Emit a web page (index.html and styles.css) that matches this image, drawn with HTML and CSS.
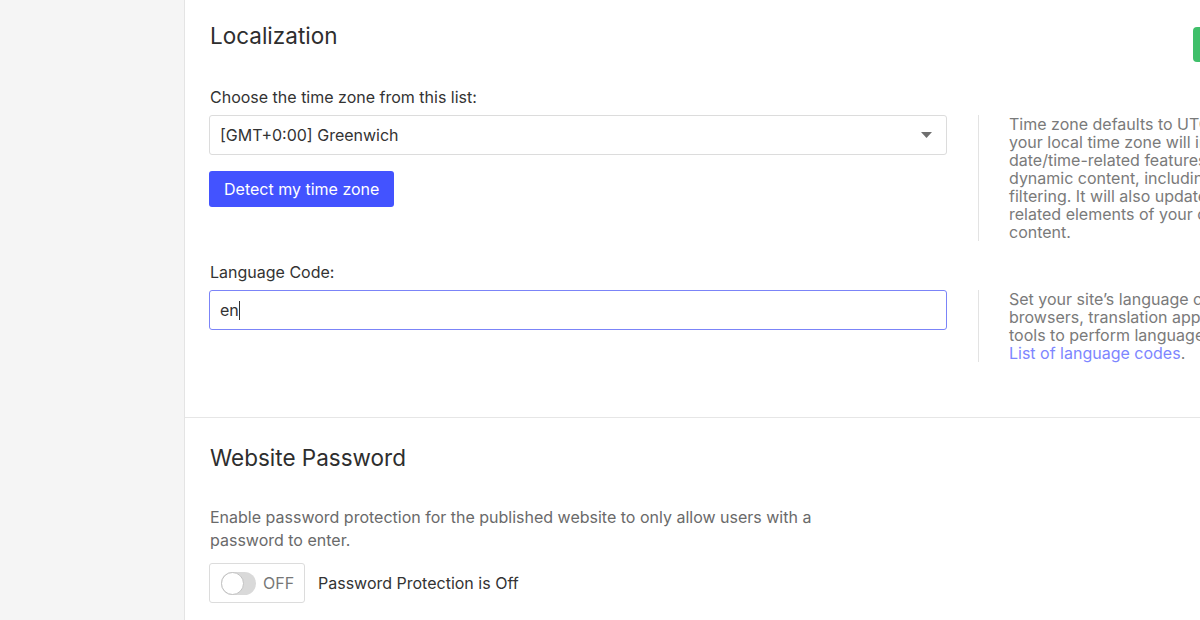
FILE: index.html
```html
<!DOCTYPE html>
<html lang="en">
<head>
<meta charset="utf-8">
<title>Settings</title>
<link rel="stylesheet" href="styles.css">
</head>
<body>
<aside class="sidebar"></aside>
<main class="main">
  <section class="section">
    <div class="head-row">
      <h2 class="heading">Localization</h2>
      <button class="save-btn" type="button">Save</button>
    </div>
    <div class="label label-first">Choose the time zone from this list:</div>
    <div class="row">
      <div class="field-col">
        <div class="select">
          <span>[GMT+0:00] Greenwich</span>
          <svg class="caret-down" width="11" height="6" viewBox="0 0 11 6"><path d="M0 0h11L5.5 6z" fill="#6f6f6f"/></svg>
        </div>
        <button class="primary-btn" type="button">Detect my time zone</button>
      </div>
      <div class="gap"></div>
      <div class="divider"></div>
      <div class="gap2"></div>
      <p class="help">Time zone defaults to UTC. Setting<br>your local time zone will impact<br>date/time-related features such as<br>dynamic content, including<br>filtering. It will also update date/time-<br>related elements of your dynamic<br>content.</p>
    </div>
    <div class="label label-second">Language Code:</div>
    <div class="row">
      <div class="field-col">
        <div class="input focused"><span>en</span><span class="text-caret"></span></div>
      </div>
      <div class="gap"></div>
      <div class="divider"></div>
      <div class="gap2"></div>
      <p class="help">Set your site’s language code so<br>browsers, translation apps, and other<br>tools to perform language-specific tasks.<br><a class="link" href="#">List of language codes</a>.</p>
    </div>
  </section>
  <section class="section section-2">
    <h2 class="heading">Website Password</h2>
    <p class="desc">Enable password protection for the published website to only allow users with a password to enter.</p>
    <div class="toggle-row">
      <div class="toggle-box">
        <span class="switch"><span class="knob"></span></span>
        <span class="off">OFF</span>
      </div>
      <span class="toggle-label">Password Protection is Off</span>
    </div>
  </section>
</main>
</body>
</html>
```
FILE: styles.css
```css
html, body {
  margin: 0;
  padding: 0;
}
body {
  display: flex;
  height: 620px;
  overflow: hidden;
  font-family: "Inter", "Noto Sans", sans-serif;
  font-size: 16px;
  color: #333;
  background: #fff;
}
.sidebar {
  flex: none;
  width: 184px;
  background: #f5f5f5;
  border-right: 1px solid #e4e4e4;
}
.main {
  flex: none;
  width: 1100px;
}
.section {
  padding: 22px 0 55px 24px;
}
.section-2 {
  border-top: 1px solid #e6e6e6;
  padding-top: 26px;
}
.head-row {
  display: flex;
  justify-content: space-between;
  align-items: flex-start;
  width: 1050px;
}
.heading {
  margin: 0;
  font-size: 22.5px;
  line-height: 28px;
  font-weight: 400;
  color: #2e2e2e;
  padding-left: 1px;
}
.save-btn {
  margin-top: 5px;
  width: 66px;
  height: 35px;
  border: none;
  border-radius: 4px;
  background: #3fbf6a;
  color: #fff;
  font-family: inherit;
  font-size: 15px;
}
.label {
  line-height: 20px;
  padding-left: 1px;
  color: #333;
}
.label-first {
  margin-top: 25px;
}
.label-second {
  margin-top: 21px;
}
.row {
  display: grid;
  grid-template-columns: 738px 31px 1px 30px 250px;
  margin-top: 8px;
}
.field-col {
  display: flex;
  flex-direction: column;
  align-items: flex-start;
}
.select, .input {
  box-sizing: border-box;
  width: 738px;
  height: 40px;
  border: 1px solid #dcdcdc;
  border-radius: 3px;
  display: flex;
  align-items: center;
  padding: 0 14px 0 10px;
  color: #333;
}
.select {
  justify-content: space-between;
}
.caret-down {
  display: block;
}
.input.focused {
  border-color: #7b84f8;
}
.text-caret {
  display: inline-block;
  width: 1px;
  height: 19px;
  background: #333;
}
.primary-btn {
  margin-top: 16px;
  height: 36px;
  padding: 0 15px;
  border: none;
  border-radius: 3px;
  background: #4353ff;
  color: #fff;
  font-family: inherit;
  font-size: 16px;
}
.divider {
  background: #e3e3e3;
}
.help {
  margin: 0;
  line-height: 18px;
  color: #7a7a7a;
  white-space: nowrap;
}
.link {
  color: #7d86ff;
  text-decoration: none;
}
.desc {
  margin: 34px 0 0;
  max-width: 640px;
  line-height: 23px;
  color: #6a6a6a;
  padding-left: 1px;
}
.toggle-row {
  display: flex;
  align-items: center;
  gap: 13px;
  margin-top: 11px;
}
.toggle-box {
  box-sizing: border-box;
  width: 96px;
  height: 40px;
  border: 1px solid #dcdcdc;
  border-radius: 3px;
  display: flex;
  align-items: center;
  padding-left: 11px;
  gap: 7px;
}
.switch {
  position: relative;
  width: 35px;
  height: 23px;
  border-radius: 12px;
  background: #d9d9d9;
}
.knob {
  position: absolute;
  left: 0;
  top: 0;
  box-sizing: border-box;
  width: 23px;
  height: 23px;
  border-radius: 50%;
  background: #fff;
  border: 1px solid #c2c2c2;
}
.off {
  color: #777;
}
.toggle-label {
  color: #333;
}
```
